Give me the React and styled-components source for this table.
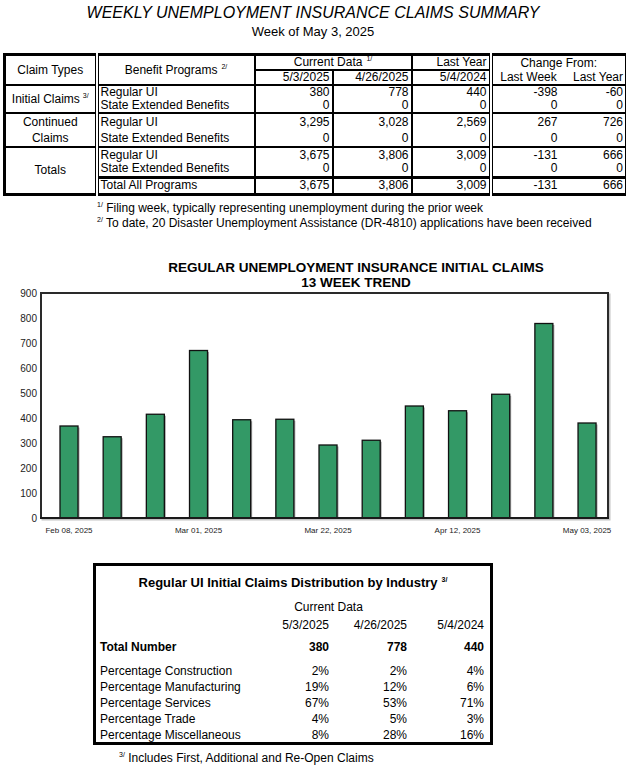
import React from "react";
import styled, { createGlobalStyle } from "styled-components";

const GlobalStyle = createGlobalStyle`
  html, body {
    margin: 0;
    padding: 0;
    background: #fff;
  }
  body {
    font-family: "Liberation Sans", Arial, sans-serif;
    color: #000;
  }
`;

const Page = styled.div`
  width: 626px;
  height: 766px;
  overflow: hidden;
  background: #fff;
`;

const Header = styled.header`
  padding-top: 3px;
  text-align: center;
`;

const Title = styled.h1`
  margin: 0;
  font-size: 16px;
  font-style: italic;
  font-weight: normal;
  line-height: 20px;
`;

const SubTitle = styled.div`
  font-size: 13px;
  line-height: 17px;
`;

const Sup = styled.sup`
  font-size: 7px;
  line-height: 0;
  vertical-align: ${(p) => p.$raise || "5px"};
  margin-left: ${(p) => p.$gap || "0"};
`;

const Summary = styled.table`
  margin: 13px 0 0 3px;
  width: 622px;
  border-collapse: collapse;
  table-layout: fixed;
  border: 3px solid #000;
  font-size: 12px;
  line-height: 13px;
`;

const Row = styled.tr`
  height: ${(p) => p.$h}px;
`;

const rightLine = {
  double: "4px double #000",
  solid: "2px solid #000",
};

const Cell = styled.td`
  padding: 0 ${(p) => p.$padR ?? 2}px 0 2px;
  text-align: ${(p) => p.$align || "right"};
  vertical-align: middle;
  white-space: nowrap;
  font-weight: normal;
  border-right: ${(p) => (p.$right ? rightLine[p.$right] : "none")};
  border-top: ${(p) => (p.$top ? `${p.$top}px solid #000` : "none")};
  border-bottom: ${(p) => (p.$bottom ? `${p.$bottom}px solid #000` : "none")};
  line-height: ${(p) => p.$lh || 13}px;
`;

const Notes = styled.div`
  margin-top: 5px;
  padding-left: 97px;
  font-size: 12px;
  line-height: 15px;
`;

const ChartTitle = styled.h2`
  margin: 29px 0 0;
  padding-left: 86px;
  text-align: center;
  font-size: 13.5px;
  font-weight: bold;
  line-height: 15px;
`;

const ChartSvg = styled.svg`
  display: block;
  overflow: visible;
  font-family: "Liberation Sans", Arial, sans-serif;
`;

const IndustryBox = styled.section`
  box-sizing: border-box;
  width: 400px;
  height: 182px;
  margin: 21px 0 0 93px;
  border: 3px solid #000;
`;

const BoxTitle = styled.h3`
  margin: 0;
  padding-top: 9px;
  text-align: center;
  font-size: 13px;
  font-weight: bold;
  line-height: 16px;
`;

const IndustryTable = styled.table`
  margin: 8px 0 0 4px;
  border-collapse: collapse;
  table-layout: fixed;
  width: 384px;
  font-size: 12px;
  line-height: 16px;
`;

const ICell = styled.td`
  padding: 0;
  text-align: ${(p) => p.$align || "right"};
  vertical-align: ${(p) => p.$valign || "middle"};
  font-weight: ${(p) => (p.$bold ? "bold" : "normal")};
  white-space: nowrap;
`;

const Footnote = styled.div`
  margin-top: 6px;
  padding-left: 119px;
  font-size: 12px;
  line-height: 14px;
`;

const groups = [
  {
    label: (
      <>
        Initial Claims<Sup $gap="3px">3/</Sup>
      </>
    ),
    h: [13, 13],
    rows: [
      ["Regular UI", "380", "778", "440", "-398", "-60"],
      ["State Extended Benefits", "0", "0", "0", "0", "0"],
    ],
  },
  {
    label: (
      <>
        Continued
        <br />
        Claims
      </>
    ),
    h: [16, 16],
    lh: 16,
    rows: [
      ["Regular UI", "3,295", "3,028", "2,569", "267", "726"],
      ["State Extended Benefits", "0", "0", "0", "0", "0"],
    ],
  },
  {
    label: "Totals",
    h: [15, 15, 17],
    rows: [
      ["Regular UI", "3,675", "3,806", "3,009", "-131", "666"],
      ["State Extended Benefits", "0", "0", "0", "0", "0"],
      ["Total All Programs", "3,675", "3,806", "3,009", "-131", "666"],
    ],
  },
];

const DataCells = ({ row, top }) => (
  <>
    <Cell $align="left" $right="solid" $top={top}>
      {row[0]}
    </Cell>
    <Cell $right="solid" $top={top}>{row[1]}</Cell>
    <Cell $right="solid" $top={top}>{row[2]}</Cell>
    <Cell $right="double" $top={top}>{row[3]}</Cell>
    <Cell $padR={7} $top={top}>{row[4]}</Cell>
    <Cell $top={top}>{row[5]}</Cell>
  </>
);

const SummaryTable = () => (
  <Summary>
    <colgroup>
      <col style={{ width: 92 }} />
      <col style={{ width: 158 }} />
      <col style={{ width: 78 }} />
      <col style={{ width: 79 }} />
      <col style={{ width: 79 }} />
      <col style={{ width: 74 }} />
      <col style={{ width: 62 }} />
    </colgroup>
    <tbody>
      <Row $h={15}>
        <Cell as="th" rowSpan={2} $align="center" $right="double" $bottom={2}>
          Claim Types
        </Cell>
        <Cell as="th" rowSpan={2} $align="center" $right="solid" $bottom={2}>
          Benefit Programs<Sup $gap="4px">2/</Sup>
        </Cell>
        <Cell as="th" colSpan={2} $align="center" $right="solid" $bottom={2}>
          Current Data<Sup $gap="4px">1/</Sup>
        </Cell>
        <Cell as="th" $right="double" $bottom={2}>
          Last Year
        </Cell>
        <Cell as="th" colSpan={2} $align="center">
          Change From:
        </Cell>
      </Row>
      <Row $h={13}>
        <Cell as="th" $right="solid" $bottom={2}>5/3/2025</Cell>
        <Cell as="th" $right="solid" $bottom={2}>4/26/2025</Cell>
        <Cell as="th" $right="double" $bottom={2}>5/4/2024</Cell>
        <Cell as="th" $align="center" $bottom={2}>Last Week</Cell>
        <Cell as="th" $bottom={2}>Last Year</Cell>
      </Row>
      {groups.map((g, gi) =>
        g.rows.map((row, ri) => (
          <Row key={`${gi}-${ri}`} $h={g.h[ri]}>
            {ri === 0 && (
              <Cell
                rowSpan={g.rows.length}
                $align="center"
                $right="double"
                $top={gi === 0 ? 0 : 2}
                $lh={g.lh}
              >
                {g.label}
              </Cell>
            )}
            <DataCells row={row} top={ri === 0 && gi > 0 ? 2 : ri === 2 ? 3 : 0} />
          </Row>
        ))
      )}
    </tbody>
  </Summary>
);

const weeks = [368, 325, 415, 670, 393, 395, 292, 311, 448, 429, 495, 778, 380];
const xLabels = {
  0: "Feb 08, 2025",
  3: "Mar 01, 2025",
  6: "Mar 22, 2025",
  9: "Apr 12, 2025",
  12: "May 03, 2025",
};
const BASE = 228;
const yOf = (v) => BASE - v * 0.25;
const barCenter = (i) => 69 + i * 43.17;

const TrendChart = () => (
  <ChartSvg width="626" height="252" viewBox="0 0 626 252">
    <rect x="42.5" y="4.5" width="567" height="225" fill="none" stroke="#c4c4c4" strokeWidth="2" />
    <rect x="41" y="3" width="567" height="225" fill="#fff" stroke="#2a2a2a" strokeWidth="2" />
    {Array.from({ length: 10 }, (_, k) => (
      <text key={k} x="37" y={yOf(k * 100)} dy="3.5" fontSize="10" textAnchor="end" fill="#222">
        {k * 100}
      </text>
    ))}
    {weeks.map((v, i) => {
      const x = barCenter(i) - 9;
      const y = yOf(v);
      return (
        <g key={i}>
          <rect x={x + 1.5} y={y + 1.5} width="18" height={BASE - y - 1.5} fill="#a8a8a8" />
          <rect x={x} y={y} width="18" height={BASE - y} fill="#339966" stroke="#111" strokeWidth="1.3" />
        </g>
      );
    })}
    <line x1="40" y1={BASE} x2="609" y2={BASE} stroke="#1a1a1a" strokeWidth="2.2" />
    {Object.entries(xLabels).map(([i, label]) => (
      <text key={i} x={barCenter(Number(i))} y="243" fontSize="8" textAnchor="middle" fill="#222">
        {label}
      </text>
    ))}
  </ChartSvg>
);

const industryRows = [
  ["Percentage Construction", "2%", "2%", "4%"],
  ["Percentage Manufacturing", "19%", "12%", "6%"],
  ["Percentage Services", "67%", "53%", "71%"],
  ["Percentage Trade", "4%", "5%", "3%"],
  ["Percentage Miscellaneous", "8%", "28%", "16%"],
];

const IndustryPanel = () => (
  <IndustryBox>
    <BoxTitle>
      Regular UI Initial Claims Distribution by Industry<Sup $gap="4px">3/</Sup>
    </BoxTitle>
    <IndustryTable>
      <colgroup>
        <col style={{ width: 150 }} />
        <col style={{ width: 79 }} />
        <col style={{ width: 78 }} />
        <col style={{ width: 77 }} />
      </colgroup>
      <tbody>
        <Row $h={16}>
          <ICell />
          <ICell colSpan={2} $align="center">Current Data</ICell>
          <ICell />
        </Row>
        <Row $h={20}>
          <ICell />
          <ICell>5/3/2025</ICell>
          <ICell>4/26/2025</ICell>
          <ICell>5/4/2024</ICell>
        </Row>
        <Row $h={24}>
          <ICell $align="left" $bold>Total Number</ICell>
          <ICell $bold>380</ICell>
          <ICell $bold>778</ICell>
          <ICell $bold>440</ICell>
        </Row>
        {industryRows.map((r, i) => (
          <Row key={r[0]} $h={i === 0 ? 20 : 16}>
            <ICell $align="left" $valign="bottom">{r[0]}</ICell>
            <ICell $valign="bottom">{r[1]}</ICell>
            <ICell $valign="bottom">{r[2]}</ICell>
            <ICell $valign="bottom">{r[3]}</ICell>
          </Row>
        ))}
      </tbody>
    </IndustryTable>
  </IndustryBox>
);

export default function App() {
  return (
    <Page>
      <GlobalStyle />
      <Header>
        <Title>WEEKLY UNEMPLOYMENT INSURANCE CLAIMS SUMMARY</Title>
        <SubTitle>Week of May 3, 2025</SubTitle>
      </Header>

      <SummaryTable />

      <Notes>
        <div>
          <Sup>1/</Sup> Filing week, typically representing unemployment during the prior week
        </div>
        <div>
          <Sup>2/</Sup> To date, 20 Disaster Unemployment Assistance (DR-4810) applications have been received
        </div>
      </Notes>

      <ChartTitle>
        REGULAR UNEMPLOYMENT INSURANCE INITIAL CLAIMS
        <br />
        13 WEEK TREND
      </ChartTitle>
      <TrendChart />

      <IndustryPanel />
      <Footnote>
        <Sup>3/</Sup> Includes First, Additional and Re-Open Claims
      </Footnote>
    </Page>
  );
}
